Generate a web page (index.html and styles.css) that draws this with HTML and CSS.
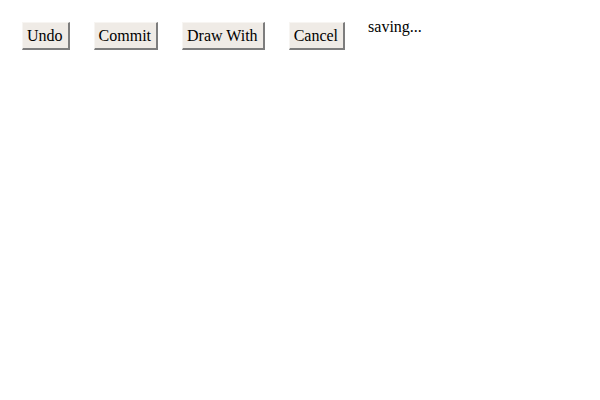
FILE: index.html
```html
<!DOCTYPE html>
<html>
<head>
<meta charset="utf-8">
<link rel="stylesheet" href="styles.css">
</head>
<body>
<div class="toolbar">
  <button class="btn">Undo</button>
  <button class="btn">Commit</button>
  <button class="btn">Draw With</button>
  <button class="btn">Cancel</button>
  <span class="status">saving...</span>
</div>
</body>
</html>
```
FILE: styles.css
```css
html, body {
  margin: 0;
  padding: 0;
  background: #ffffff;
}
body {
  font-family: "Liberation Serif", "Times New Roman", serif;
  font-size: 16px;
  color: #000;
}
.toolbar {
  display: flex;
  align-items: flex-start;
  gap: 24px;
  padding: 16px 0 0 22px;
}
.btn {
  margin: 6px 0 0 0;
  font-family: "Liberation Serif", "Times New Roman", serif;
  font-size: 16px;
  line-height: 18px;
  color: #000;
  background: #efebe6;
  padding: 4px 5px 3px 4px;
  border-style: solid;
  border-width: 1px 2px 2px 1px;
  border-color: #f7f5f2 #7d7d7d #7d7d7d #f7f5f2;
  border-radius: 0;
  cursor: default;
}
.status {
  margin-left: -1px;
  line-height: 18px;
  padding-top: 2px;
}
```
